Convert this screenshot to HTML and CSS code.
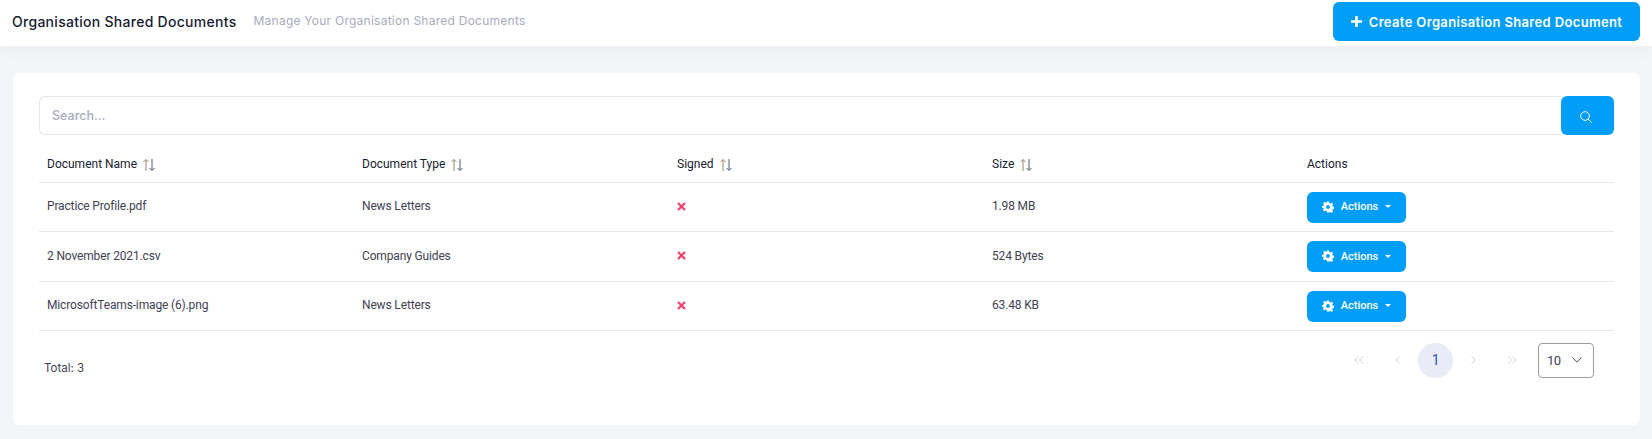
FILE: index.html
```html
<!DOCTYPE html>
<html lang="en">
<head>
  <meta charset="UTF-8" />
  <meta name="viewport" content="width=device-width, initial-scale=1.0"/>
  <title>Organisation Shared Documents</title>
  <link rel="stylesheet" href="styles.css">
</head>
<body>
  <header class="topbar">
    <div class="topbar-titles">
      <h1>Organisation Shared Documents</h1>
      <span class="subtitle">Manage Your Organisation Shared Documents</span>
    </div>
    <button class="create-button">
      <svg width="11" height="11" viewBox="0 0 11 11"><path d="M5.5 0v11M0 5.500h11" stroke="#fff" stroke-width="2.600"/></svg>
      Create Organisation Shared Document
    </button>
  </header>

  <main class="card">
    <div class="search-row">
      <input class="search-input" type="text" placeholder="Search..." />
      <button class="search-button">
        <svg width="12" height="12" viewBox="0 0 12 12" fill="none" stroke="#fff"><circle cx="5" cy="5" r="4.300"/><path d="M8 8l3.700 3.700"/></svg>
      </button>
    </div>

    <table class="docs">
      <thead>
        <tr>
          <th>Document Name <svg class="sort" width="12" height="12" viewBox="0 0 12 12" fill="none"><path d="M3 12V.8M.5 3L3 .5 5.500 3" stroke="#9a8466"/><path d="M9 0v11.200M6.500 9L9 11.500 11.500 9" stroke="#4a5d70"/></svg></th>
          <th>Document Type <svg class="sort" width="12" height="12" viewBox="0 0 12 12" fill="none"><path d="M3 12V.8M.5 3L3 .5 5.500 3" stroke="#9a8466"/><path d="M9 0v11.200M6.500 9L9 11.500 11.500 9" stroke="#4a5d70"/></svg></th>
          <th>Signed <svg class="sort" width="12" height="12" viewBox="0 0 12 12" fill="none"><path d="M3 12V.8M.5 3L3 .5 5.500 3" stroke="#9a8466"/><path d="M9 0v11.200M6.500 9L9 11.500 11.500 9" stroke="#4a5d70"/></svg></th>
          <th>Size <svg class="sort" width="12" height="12" viewBox="0 0 12 12" fill="none"><path d="M3 12V.8M.5 3L3 .5 5.500 3" stroke="#9a8466"/><path d="M9 0v11.200M6.500 9L9 11.500 11.500 9" stroke="#4a5d70"/></svg></th>
          <th>Actions</th>
        </tr>
      </thead>
      <tbody>
        <tr>
          <td>Practice Profile.pdf</td>
          <td>News Letters</td>
          <td><svg class="cross" width="9" height="9" viewBox="0 0 9 9"><path d="M1 1l7 7M8 1L1 8" stroke="#f1416c" stroke-width="2.200"/></svg></td>
          <td>1.98 MB</td>
          <td><button class="actions-button"><svg width="12" height="12" viewBox="0 0 24 24"><path fill="#fff" fill-rule="evenodd" d="M10 1h4l.7 3.200 2 .8 2.800-1.700 2.800 2.800-1.700 2.800.8 2 3.100.7v4l-3.100.7-.8 2 1.700 2.800-2.800 2.800-2.800-1.700-2 .8L14 23h-4l-.7-3.200-2-.8-2.800 1.700-2.800-2.800 1.700-2.800-.8-2L0 14v-4l3.100-.7.800-2L2.200 4.500 5 1.700l2.800 1.700 2-.8zM12 8.200a3.800 3.800 0 1 0 0 7.600 3.800 3.800 0 0 0 0-7.600z"/></svg>Actions<span class="caret"></span></button></td>
        </tr>
        <tr class="middle-row">
          <td>2 November 2021.csv</td>
          <td>Company Guides</td>
          <td><svg class="cross" width="9" height="9" viewBox="0 0 9 9"><path d="M1 1l7 7M8 1L1 8" stroke="#f1416c" stroke-width="2.200"/></svg></td>
          <td>524 Bytes</td>
          <td><button class="actions-button"><svg width="12" height="12" viewBox="0 0 24 24"><path fill="#fff" fill-rule="evenodd" d="M10 1h4l.7 3.200 2 .8 2.800-1.700 2.800 2.800-1.700 2.800.8 2 3.100.7v4l-3.100.7-.8 2 1.700 2.800-2.800 2.800-2.800-1.700-2 .8L14 23h-4l-.7-3.200-2-.8-2.800 1.700-2.800-2.800 1.700-2.800-.8-2L0 14v-4l3.100-.7.800-2L2.200 4.500 5 1.700l2.800 1.700 2-.8zM12 8.200a3.800 3.800 0 1 0 0 7.600 3.800 3.800 0 0 0 0-7.600z"/></svg>Actions<span class="caret"></span></button></td>
        </tr>
        <tr>
          <td>MicrosoftTeams-image (6).png</td>
          <td>News Letters</td>
          <td><svg class="cross" width="9" height="9" viewBox="0 0 9 9"><path d="M1 1l7 7M8 1L1 8" stroke="#f1416c" stroke-width="2.200"/></svg></td>
          <td>63.48 KB</td>
          <td><button class="actions-button"><svg width="12" height="12" viewBox="0 0 24 24"><path fill="#fff" fill-rule="evenodd" d="M10 1h4l.7 3.200 2 .8 2.800-1.700 2.800 2.800-1.700 2.800.8 2 3.100.7v4l-3.100.7-.8 2 1.700 2.800-2.800 2.800-2.800-1.700-2 .8L14 23h-4l-.7-3.200-2-.8-2.800 1.700-2.800-2.800 1.700-2.800-.8-2L0 14v-4l3.100-.7.800-2L2.200 4.500 5 1.700l2.800 1.700 2-.8zM12 8.200a3.800 3.800 0 1 0 0 7.600 3.800 3.800 0 0 0 0-7.600z"/></svg>Actions<span class="caret"></span></button></td>
        </tr>
      </tbody>
    </table>

    <div class="table-footer">
      <span class="total">Total: 3</span>
      <div class="pager">
        <span class="page-link"><svg width="10" height="8" viewBox="0 0 10 8" fill="none" stroke="#d2d2d6"><path d="M4.500 .5L1 4l3.500 3.500M9 .5L5.500 4 9 7.500"/></svg></span>
        <span class="page-link"><svg width="5" height="8" viewBox="0 0 5 8" fill="none" stroke="#d2d2d6"><path d="M4.500 .5L1 4l3.500 3.500"/></svg></span>
        <span class="page-link current">1</span>
        <span class="page-link"><svg width="5" height="8" viewBox="0 0 5 8" fill="none" stroke="#d2d2d6"><path d="M.5 .5L4 4 .5 7.500"/></svg></span>
        <span class="page-link"><svg width="10" height="8" viewBox="0 0 10 8" fill="none" stroke="#d2d2d6"><path d="M1 .5L4.500 4 1 7.500M5.500 .5L9 4 5.500 7.500"/></svg></span>
        <div class="page-size">
          <span>10</span>
          <svg width="10" height="6" viewBox="0 0 10 6" fill="none" stroke="#50535f"><path d="M.4 .5L5 5.100 9.600 .5"/></svg>
        </div>
      </div>
    </div>
  </main>
</body>
</html>
```

FILE: styles.css
```css
* {
  box-sizing: border-box;
}
body {
  font-family: Roboto, sans-serif;
  background-color: #f3f6f9;
  color: #3f4254;
  height: 439px;
  margin: 0;
  overflow: hidden;
}
button {
  border: none;
  cursor: pointer;
  color: white;
  background-color: #009ef7;
}
.topbar {
  height: 46px;
  background-color: white;
  box-shadow: 0 4px 14px rgba(82, 63, 105, 0.05);
  display: flex;
  justify-content: space-between;
  align-items: flex-start;
  padding: 2px 12px 0 12px;
}
.topbar-titles {
  display: flex;
  align-items: center;
  gap: 17px;
  height: 38px;
}
h1 {
  margin: 0;
  font-family: Inter, sans-serif;
  font-size: 14px;
  font-weight: 500;
  letter-spacing: 0.28px;
  color: #181c32;
}
.subtitle {
  padding-bottom: 2px;
  font-family: Inter, sans-serif;
  font-size: 12px;
  letter-spacing: 0.25px;
  color: #a9abc0;
}
.create-button {
  width: 307px;
  height: 39px;
  border-radius: 6px;
  font-family: Inter, sans-serif;
  font-size: 13px;
  font-weight: 600;
  letter-spacing: 0.35px;
  display: flex;
  align-items: center;
  justify-content: center;
  gap: 7px;
}
.card {
  margin: 27px 12px 0 13px;
  height: 352px;
  background-color: white;
  border-radius: 6px;
  padding: 23px 26px 0 26px;
}
.search-row {
  display: flex;
  height: 39px;
}
.search-input {
  flex: 1;
  border: 1px solid #e4e6ef;
  border-right: none;
  border-radius: 6px 0 0 6px;
  padding: 0 12px;
  font-family: Inter, sans-serif;
  font-size: 12.5px;
  font-weight: 500;
  outline: none;
}
.search-input::placeholder {
  color: #a9abc0;
}
.search-button {
  width: 53px;
  border-radius: 6px;
  display: flex;
  align-items: center;
  justify-content: center;
  padding: 2px 3px 0 0;
}
.docs {
  width: 100%;
  border-collapse: collapse;
  table-layout: fixed;
  font-size: 12px;
}
.docs th {
  height: 47px;
  padding: 11px 8px 0 8px;
  text-align: left;
  font-weight: 400;
  color: #181c32;
  border-bottom: 1px solid #e6e6e6;
}
.docs td {
  height: 49px;
  padding: 0 8px 1px 8px;
  letter-spacing: -0.15px;
  border-bottom: 1px solid #e6e6e6;
}
.middle-row td {
  height: 50px;
}
.sort {
  vertical-align: -3px;
  margin-left: 3px;
}
.cross {
  display: block;
}
.actions-button {
  width: 99px;
  height: 31px;
  margin-top: 2px;
  padding-bottom: 2px;
  border-radius: 6px;
  font-family: Roboto, sans-serif;
  font-size: 11px;
  font-weight: 500;
  display: flex;
  align-items: center;
  justify-content: center;
  gap: 7px;
}
.caret {
  width: 0;
  height: 0;
  border-left: 3.5px solid transparent;
  border-right: 3.5px solid transparent;
  border-top: 3.5px solid white;
}
.table-footer {
  display: flex;
  justify-content: space-between;
  padding-top: 12px;
}
.total {
  font-family: Inter, sans-serif;
  font-size: 11.5px;
  color: #3f4254;
  margin: 18px 0 0 5px;
}
.pager {
  display: flex;
  align-items: center;
  gap: 3.3px;
  padding-right: 20px;
}
.page-link {
  width: 35px;
  height: 35px;
  border-radius: 50%;
  display: flex;
  align-items: center;
  justify-content: center;
  font-size: 14px;
}
.current {
  background-color: #e9ebf6;
  color: #2f55c4;
}
.page-size {
  width: 56px;
  height: 35px;
  margin-left: 5px;
  border: 1px solid #9c9c9c;
  border-radius: 4px;
  display: flex;
  align-items: center;
  justify-content: space-between;
  padding: 0 11px 0 8px;
  font-size: 13px;
  letter-spacing: -0.5px;
}
```
